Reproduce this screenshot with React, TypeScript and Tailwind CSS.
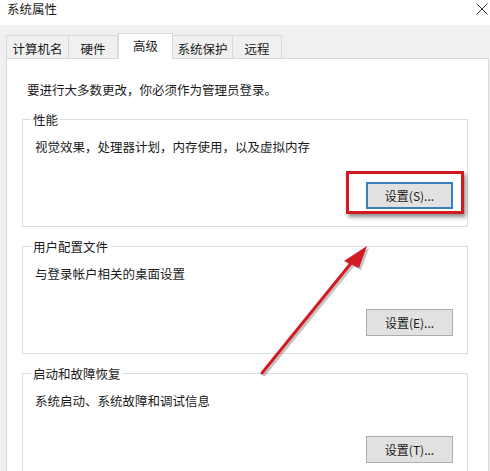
import React from "react";

const font = { fontFamily: '"Noto Sans CJK SC", "Noto Sans", sans-serif' };

function Btn({ label, focused }: { label: string; focused?: boolean }) {
  return (
    <div
      className={
        "w-[87px] h-[27px] flex items-center justify-center text-[12px] text-[#1a1a1a] bg-[#e1e1e1] " +
        (focused ? "border-2 border-[#3a80bf]" : "border border-[#adadad]")
      }
    >
      {label}
    </div>
  );
}

function Group({
  title,
  text,
  button,
  focused,
}: {
  title: string;
  text: string;
  button: string;
  focused?: boolean;
}) {
  return (
    <fieldset className="ml-[15px] mr-[20px] border border-[#dcdcdc] px-0 pb-[17px] min-w-0">
      <legend className="ml-[8px] px-[2px] text-[12.5px] leading-[17px] text-[#1a1a1a]">{title}</legend>
      <div className="pl-[12px] mt-[10px] text-[12.5px] leading-[17px] text-[#1a1a1a]">{text}</div>
      <div className="flex justify-end mr-[14px] mt-[27px]">
        <div className="relative">
          <Btn label={button} focused={focused} />
          {focused && (
            <div className="absolute left-[-20px] right-[-11px] top-[-11px] bottom-[-5px] border-[3px] border-[#d11a22] shadow-[2px_3px_4px_rgba(0,0,0,0.45)] pointer-events-none" />
          )}
        </div>
      </div>
    </fieldset>
  );
}

export default function App() {
  const tabs = ["计算机名", "硬件", "高级", "系统保护", "远程"];
  const widths = [63, 49, 55, 60, 49];
  return (
    <div className="relative w-[490px] h-[471px] overflow-hidden bg-[#f0f0f0]" style={font}>
      {/* title bar */}
      <div className="h-[25px] bg-white flex items-start justify-between pl-[7px] pr-[2px]">
        <span className="text-[12.5px] leading-[17px] text-[#1a1a1a]">系统属性</span>
        <svg width="12" height="12" viewBox="0 0 12 12" className="mt-[3px]">
          <path d="M0.5 0.5 L11.5 11.5 M11.5 0.5 L0.5 11.5" stroke="#333" strokeWidth="1" />
        </svg>
      </div>

      {/* tabs */}
      <div className="flex items-end pl-[6px] pt-[8px] h-[33px]">
        {tabs.map((t, i) => {
          const active = i === 2;
          return (
            <div
              key={t}
              style={{ width: widths[i] }}
              className={
                "flex justify-center text-[12.5px] leading-[17px] text-[#1a1a1a] border-t border-r border-[#d9d9d9] " +
                (i === 0 ? "border-l " : "") +
                (active
                  ? "h-[26px] bg-white -mb-px relative z-10 pt-[3px] border-l"
                  : "h-[23px] bg-[#f0f0f0] pt-[4px]")
              }
            >
              {t}
            </div>
          );
        })}
      </div>

      {/* panel */}
      <div className="ml-[6px] w-[483px] h-[420px] bg-white border border-[#d9d9d9] pt-[22px]">
        <div className="pl-[20px] text-[12.5px] leading-[17px] text-[#1a1a1a]">
          要进行大多数更改，你必须作为管理员登录。
        </div>
        <div className="mt-[13px] flex flex-col gap-[11px]">
          <Group title="性能" text="视觉效果，处理器计划，内存使用，以及虚拟内存" button="设置(S)..." focused />
          <Group title="用户配置文件" text="与登录帐户相关的桌面设置" button="设置(E)..." />
          <Group title="启动和故障恢复" text="系统启动、系统故障和调试信息" button="设置(T)..." />
        </div>
      </div>

      {/* arrow annotation */}
      <svg className="absolute left-0 top-0 pointer-events-none" width="490" height="471" viewBox="0 0 490 471">
        <g opacity="0.35" transform="translate(2 2)">
          <line x1="262" y1="373" x2="352" y2="262" stroke="#555" strokeWidth="3" strokeLinecap="round" />
          <polygon points="367,246 344,261 359,268" fill="#555" />
        </g>
        <line x1="262" y1="373" x2="352" y2="262" stroke="#d01c22" strokeWidth="3" strokeLinecap="round" />
        <polygon points="367,246 344,261 359,268" fill="#d01c22" />
      </svg>
    </div>
  );
}
